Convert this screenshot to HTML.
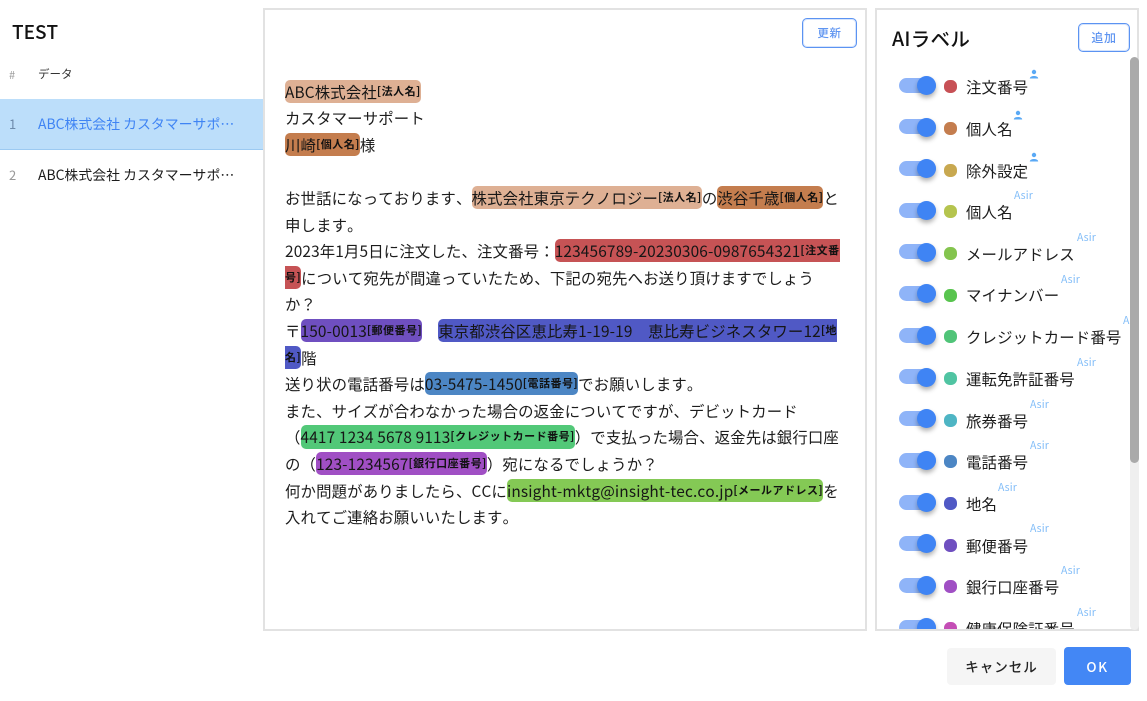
<!DOCTYPE html>
<html lang="ja"><head><meta charset="utf-8"><style>
*{box-sizing:border-box}
html,body{margin:0;padding:0;width:1147px;height:701px;overflow:hidden;background:#fff}
body{font-family:"Noto Sans CJK JP","Liberation Sans",sans-serif;color:#222;position:relative;text-spacing-trim:space-all;font-kerning:none}
.a{position:absolute;white-space:nowrap}
.panel{position:absolute;border:2px solid #e2e2e2;background:#fff}
.l{position:absolute;left:285px;white-space:nowrap;font-size:15.4px;letter-spacing:.15px;line-height:24px;height:24px;color:#1c1c1c}
.m{display:inline-block;height:23.4px;line-height:24px;border-radius:5px;color:#161616;vertical-align:top}
.m.nr{border-radius:5px 0 0 5px}
.m.nl{border-radius:0 5px 5px 0}
.m b{font-size:11px;font-weight:700;position:relative;top:-3px;letter-spacing:.5px;color:#111}
.tr{position:absolute;left:899px;width:37px;height:15px;border-radius:8px;background:#8fb4f8}
.kn{position:absolute;left:917px;width:19px;height:19px;border-radius:50%;background:#3f84f4;box-shadow:0 3px 5px rgba(0,0,0,.3)}
.dot{position:absolute;left:944px;width:13px;height:13px;border-radius:45%}
.t{position:absolute;left:966px;font-size:15.4px;letter-spacing:.15px;line-height:22px;white-space:nowrap;color:#1c1c1c}
.as{position:absolute;font-size:10.5px;line-height:14px;color:#82bdf8;letter-spacing:.2px;white-space:nowrap;margin-top:1px}
.btn{position:absolute;white-space:nowrap;border:1px solid #5b93f2;box-shadow:inset 0 0 0 1px rgba(91,147,242,.25);border-radius:5px;color:#5f95f1;font-weight:500;text-align:center;letter-spacing:.6px}
</style></head><body>
<div class="a" style="left:12px;top:18px;font-size:19px;font-weight:500;line-height:28px;color:#111">TEST</div>
<div class="a" style="left:9px;top:67px;font-size:11px;line-height:16px;color:#999">#</div>
<div class="a" style="left:38px;top:66px;font-size:11.5px;line-height:17px;color:#333">データ</div>
<div class="a" style="left:0;top:99px;width:264px;height:51px;background:#bcdefa;border-bottom:1px solid #9ccaf2"></div>
<div class="a" style="left:9px;top:114px;font-size:13px;line-height:20px;color:#6d8bab">1</div>
<div class="a" style="left:38px;top:114px;font-size:13.9px;line-height:20px;color:#3f84f4">ABC株式会社 カスタマーサポ…</div>
<div class="a" style="left:9px;top:165px;font-size:13px;line-height:20px;color:#999">2</div>
<div class="a" style="left:38px;top:165px;font-size:13.9px;line-height:20px;color:#1c1c1c">ABC株式会社 カスタマーサポ…</div>

<div class="panel" style="left:263px;top:8px;width:604px;height:623px"></div>
<div class="btn" style="left:802px;top:18px;width:55px;height:30px;font-size:11.5px;line-height:28px">更新</div>

<div class="l" style="top:79.5px"><span class="m" style="background:#deb094">ABC株式会社<b>[法人名]</b></span></div>
<div class="l" style="top:106.1px">カスタマーサポート</div>
<div class="l" style="top:132.7px"><span class="m" style="background:#c47d4e">川崎<b>[個人名]</b></span>様</div>
<div class="l" style="top:185.9px">お世話になっております、<span class="m" style="background:#deb094">株式会社東京テクノロジー<b>[法人名]</b></span>の<span class="m" style="background:#c47d4e">渋谷千歳<b>[個人名]</b></span>と</div>
<div class="l" style="top:212.5px">申します。</div>
<div class="l" style="top:239.1px">2023年1月5日に注文した、注文番号：<span class="m nr" style="background:#c65355">123456789-20230306-0987654321<b>[注文番</b></span></div>
<div class="l" style="top:265.7px"><span class="m nl" style="background:#c65355"><b>号]</b></span>について宛先が間違っていたため、下記の宛先へお送り頂けますでしょう</div>
<div class="l" style="top:292.3px">か？</div>
<div class="l" style="top:318.9px">〒<span class="m" style="background:#6f4fc0">150-0013<b>[郵便番号]</b></span><span style="display:inline-block;width:16px"></span><span class="m nr" style="background:#5059c5">東京都渋谷区恵比寿1-19-19　恵比寿ビジネスタワー12<b>[地</b></span></div>
<div class="l" style="top:345.5px"><span class="m nl" style="background:#5059c5"><b>名]</b></span>階</div>
<div class="l" style="top:372.1px">送り状の電話番号は<span class="m" style="background:#4c86c4">03-5475-1450<b>[電話番号]</b></span>でお願いします。</div>
<div class="l" style="top:398.7px">また、サイズが合わなかった場合の返金についてですが、デビットカード</div>
<div class="l" style="top:425.3px">（<span class="m" style="background:#52c878">4417 1234 5678 9113<b>[クレジットカード番号]</b></span>）で支払った場合、返金先は銀行口座</div>
<div class="l" style="top:451.9px">の（<span class="m" style="background:#a04fc4">123-1234567<b>[銀行口座番号]</b></span>）宛になるでしょうか？</div>
<div class="l" style="top:478.5px">何か問題がありましたら、CCに<span class="m" style="background:#84c955">insight-mktg@insight-tec.co.jp<b>[メールアドレス]</b></span>を</div>
<div class="l" style="top:505.1px">入れてご連絡お願いいたします。</div>

<div class="panel" style="left:875px;top:8px;width:264px;height:623px"></div>
<div class="a" style="left:892px;top:24px;font-size:19.5px;font-weight:500;line-height:28px;color:#111;letter-spacing:.3px">AIラベル</div>
<div class="btn" style="left:1078px;top:23px;width:52px;height:29px;font-size:12px;line-height:27px">追加</div>
<div class="a" style="left:1130px;top:57px;width:9px;height:573px;background:#efefef;border-radius:5px"></div>
<div class="a" style="left:1130px;top:57px;width:9px;height:406px;background:#aaa;border-radius:5px"></div>

<div class="a" style="left:876px;top:56px;width:254px;height:573px;overflow:hidden">
<div style="position:absolute;left:-876px;top:-56px;width:1147px;height:701px">
<div class="tr" style="top:78px"></div><div class="kn" style="top:76px"></div><div class="dot" style="top:80px;background:#c75055"></div><div class="t" style="top:76px">注文番号</div>
<svg class="a" style="left:1029px;top:69px" width="10" height="10" viewBox="0 0 10 10"><circle cx="5" cy="3" r="2.200" fill="#5aa9f5"/><path d="M.8 9.500c0-3.400 8.400-3.400 8.400 0z" fill="#5aa9f5"/></svg>
<div class="tr" style="top:119px"></div><div class="kn" style="top:118px"></div><div class="dot" style="top:122px;background:#c47d4e"></div><div class="t" style="top:118px">個人名</div>
<svg class="a" style="left:1013px;top:110px" width="10" height="10" viewBox="0 0 10 10"><circle cx="5" cy="3" r="2.200" fill="#5aa9f5"/><path d="M.8 9.500c0-3.400 8.400-3.400 8.400 0z" fill="#5aa9f5"/></svg>
<div class="tr" style="top:161px"></div><div class="kn" style="top:159px"></div><div class="dot" style="top:164px;background:#c8a850"></div><div class="t" style="top:160px">除外設定</div>
<svg class="a" style="left:1029px;top:152px" width="10" height="10" viewBox="0 0 10 10"><circle cx="5" cy="3" r="2.200" fill="#5aa9f5"/><path d="M.8 9.500c0-3.400 8.400-3.400 8.400 0z" fill="#5aa9f5"/></svg>
<div class="tr" style="top:203px"></div><div class="kn" style="top:201px"></div><div class="dot" style="top:205px;background:#b5c44e"></div><div class="t" style="top:201px">個人名</div><div class="as" style="left:1014px;top:188px">Asir</div>
<div class="tr" style="top:244px"></div><div class="kn" style="top:243px"></div><div class="dot" style="top:247px;background:#84c44e"></div><div class="t" style="top:243px">メールアドレス</div><div class="as" style="left:1077px;top:230px">Asir</div>
<div class="tr" style="top:286px"></div><div class="kn" style="top:284px"></div><div class="dot" style="top:289px;background:#58c44e"></div><div class="t" style="top:284px">マイナンバー</div><div class="as" style="left:1061px;top:272px">Asir</div>
<div class="tr" style="top:328px"></div><div class="kn" style="top:326px"></div><div class="dot" style="top:330px;background:#50c478"></div><div class="t" style="top:326px">クレジットカード番号</div><div class="as" style="left:1123px;top:313px">Asir</div>
<div class="tr" style="top:369px"></div><div class="kn" style="top:368px"></div><div class="dot" style="top:372px;background:#50c4a2"></div><div class="t" style="top:368px">運転免許証番号</div><div class="as" style="left:1077px;top:355px">Asir</div>
<div class="tr" style="top:411px"></div><div class="kn" style="top:409px"></div><div class="dot" style="top:414px;background:#4eb5c4"></div><div class="t" style="top:410px">旅券番号</div><div class="as" style="left:1030px;top:397px">Asir</div>
<div class="tr" style="top:453px"></div><div class="kn" style="top:451px"></div><div class="dot" style="top:455px;background:#4c86c4"></div><div class="t" style="top:451px">電話番号</div><div class="as" style="left:1030px;top:438px">Asir</div>
<div class="tr" style="top:495px"></div><div class="kn" style="top:493px"></div><div class="dot" style="top:497px;background:#5059c5"></div><div class="t" style="top:493px">地名</div><div class="as" style="left:998px;top:480px">Asir</div>
<div class="tr" style="top:536px"></div><div class="kn" style="top:534px"></div><div class="dot" style="top:539px;background:#6f4fc0"></div><div class="t" style="top:535px">郵便番号</div><div class="as" style="left:1030px;top:521px">Asir</div>
<div class="tr" style="top:578px"></div><div class="kn" style="top:576px"></div><div class="dot" style="top:580px;background:#a04fc4"></div><div class="t" style="top:576px">銀行口座番号</div><div class="as" style="left:1061px;top:563px">Asir</div>
<div class="tr" style="top:620px"></div><div class="kn" style="top:618px"></div><div class="dot" style="top:622px;background:#c44eb5"></div><div class="t" style="top:618px">健康保険証番号</div><div class="as" style="left:1077px;top:605px">Asir</div>
</div></div>

<div class="a" style="left:947px;top:648px;width:109px;height:37px;background:#f5f5f5;border-radius:4px;font-size:13.5px;font-weight:500;line-height:37px;text-align:center;letter-spacing:1px;color:#222">キャンセル</div>
<div class="a" style="left:1064px;top:647px;width:67px;height:38px;background:#4387f5;border-radius:4px;font-size:13.5px;font-weight:500;line-height:38px;text-align:center;letter-spacing:1.5px;color:#fff">OK</div>
</body></html>
